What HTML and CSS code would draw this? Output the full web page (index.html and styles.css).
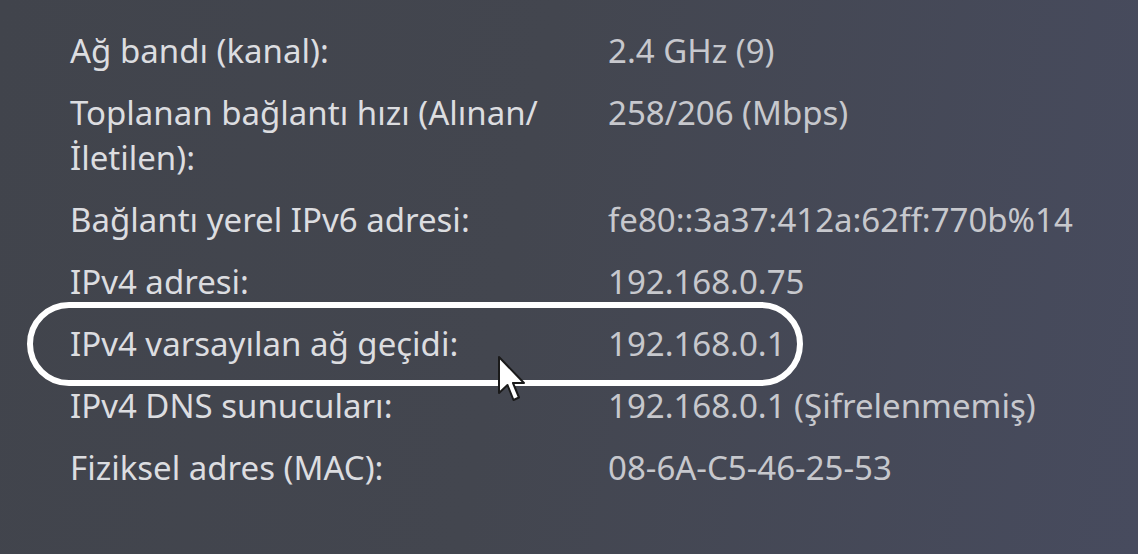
FILE: index.html
```html
<!DOCTYPE html>
<html lang="tr">
<head>
    <meta charset="UTF-8">
    <meta name="viewport" content="width=device-width, initial-scale=1.0">
    <title>Ağ özellikleri</title>
    <link rel="stylesheet" href="styles.css">
</head>
<body>

    <div class="props">
        <div class="row">
            <div class="label">Ağ bandı (kanal):</div>
            <div class="value">2.4 GHz (9)</div>
        </div>
        <div class="row">
            <div class="label">Toplanan bağlantı hızı (Alınan/<br>İletilen):</div>
            <div class="value">258/206 (Mbps)</div>
        </div>
        <div class="row">
            <div class="label">Bağlantı yerel IPv6 adresi:</div>
            <div class="value">fe80::3a37:412a:62ff:770b%14</div>
        </div>
        <div class="row">
            <div class="label">IPv4 adresi:</div>
            <div class="value">192.168.0.75</div>
        </div>
        <div class="row highlight">
            <div class="label">IPv4 varsayılan ağ geçidi:</div>
            <div class="value">192.168.0.1</div>
            <svg class="cursor" width="30" height="48" viewBox="0 0 30 48">
                <path d="M2 2 L2 38 L10.5 30 L16.5 45 L22 42.5 L16 28 L27 28 Z" fill="#fff" stroke="#1a1a1a" stroke-width="2" stroke-linejoin="round"/>
            </svg>
        </div>
        <div class="row">
            <div class="label">IPv4 DNS sunucuları:</div>
            <div class="value">192.168.0.1 (Şifrelenmemiş)</div>
        </div>
        <div class="row">
            <div class="label">Fiziksel adres (MAC):</div>
            <div class="value">08-6A-C5-46-25-53</div>
        </div>
    </div>

</body>
</html>
```

FILE: styles.css
```css
html, body {
    margin: 0;
    height: 100%;
}
body {
    background: linear-gradient(100deg, #41444c 0%, #43464f 45%, #474b5e 100%);
    font-family: "Noto Sans", "Open Sans", sans-serif;
    font-size: 33px;
    line-height: 45px;
    color: #dcdde0;
    overflow: hidden;
}
.props {
    display: flex;
    flex-direction: column;
    gap: 17px;
    padding: 28px 0 0 70px;
}
.row {
    display: grid;
    grid-template-columns: 538px auto;
    position: relative;
}
.value {
    color: #c7c8cd;
}
.highlight::before {
    content: "";
    position: absolute;
    left: -43px;
    top: -19px;
    width: 776px;
    height: 84px;
    box-sizing: border-box;
    border: 6px solid #fff;
    border-radius: 42px;
}
.cursor {
    position: absolute;
    left: 427px;
    top: 34px;
}
```
